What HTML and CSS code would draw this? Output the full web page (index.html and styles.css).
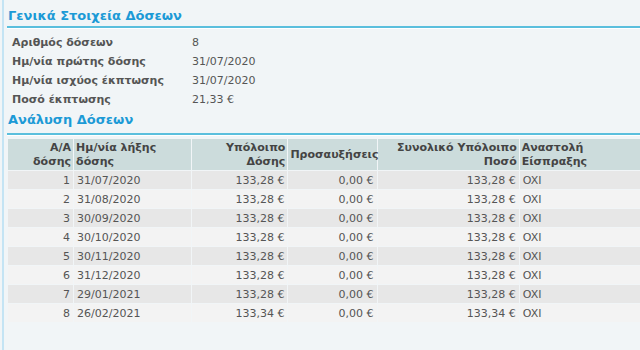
FILE: index.html
```html
<!DOCTYPE html>
<html lang="el">
<head>
<meta charset="utf-8">
<title>Γενικά Στοιχεία Δόσεων</title>
<link rel="stylesheet" href="styles.css">
</head>
<body>
<div class="page">
  <h2 class="section-title">Γενικά Στοιχεία Δόσεων</h2>
  <table class="info">
    <tr><th>Αριθμός δόσεων</th><td>8</td></tr>
    <tr><th>Ημ/νία πρώτης δόσης</th><td>31/07/2020</td></tr>
    <tr><th>Ημ/νία ισχύος έκπτωσης</th><td>31/07/2020</td></tr>
    <tr><th>Ποσό έκπτωσης</th><td>21,33 €</td></tr>
  </table>
  <h2 class="section-title second">Ανάλυση Δόσεων</h2>
  <table class="grid">
    <colgroup>
      <col class="c1"><col class="c2"><col class="c3"><col class="c4"><col class="c5"><col class="c6">
    </colgroup>
    <thead>
      <tr>
        <th class="num">Α/Α<br>δόσης</th>
        <th>Ημ/νία λήξης<br>δόσης</th>
        <th class="num">Υπόλοιπο<br>Δόσης</th>
        <th>Προσαυξήσεις</th>
        <th class="num">Συνολικό Υπόλοιπο<br>Ποσό</th>
        <th>Αναστολή<br>Είσπραξης</th>
      </tr>
    </thead>
    <tbody>
      <tr><td class="num">1</td><td>31/07/2020</td><td class="num">133,28 €</td><td class="num">0,00 €</td><td class="num">133,28 €</td><td>OXI</td></tr>
      <tr><td class="num">2</td><td>31/08/2020</td><td class="num">133,28 €</td><td class="num">0,00 €</td><td class="num">133,28 €</td><td>OXI</td></tr>
      <tr><td class="num">3</td><td>30/09/2020</td><td class="num">133,28 €</td><td class="num">0,00 €</td><td class="num">133,28 €</td><td>OXI</td></tr>
      <tr><td class="num">4</td><td>30/10/2020</td><td class="num">133,28 €</td><td class="num">0,00 €</td><td class="num">133,28 €</td><td>OXI</td></tr>
      <tr><td class="num">5</td><td>30/11/2020</td><td class="num">133,28 €</td><td class="num">0,00 €</td><td class="num">133,28 €</td><td>OXI</td></tr>
      <tr><td class="num">6</td><td>31/12/2020</td><td class="num">133,28 €</td><td class="num">0,00 €</td><td class="num">133,28 €</td><td>OXI</td></tr>
      <tr><td class="num">7</td><td>29/01/2021</td><td class="num">133,28 €</td><td class="num">0,00 €</td><td class="num">133,28 €</td><td>OXI</td></tr>
      <tr><td class="num">8</td><td>26/02/2021</td><td class="num">133,34 €</td><td class="num">0,00 €</td><td class="num">133,34 €</td><td>OXI</td></tr>
    </tbody>
  </table>
</div>
</body>
</html>
```

FILE: styles.css
```css
html, body {
  margin: 0;
  padding: 0;
  background: #f1f5f7;
  overflow: hidden;
}
body {
  font-family: "DejaVu Sans", Verdana, sans-serif;
  font-size: 11px;
  color: #555;
}
.page {
  margin-left: 2px;
  border-left: 2px solid #c4e4f4;
  padding-left: 3px;
  min-height: 350px;
  box-sizing: border-box;
}
.section-title {
  margin: 0;
  padding: 8px 0 3px 1px;
  font-size: 13px;
  line-height: 15px;
  font-weight: bold;
  color: #1c9ad6;
  border-bottom: 2px solid #5bbfdd;
  box-shadow: 0 1px 0 #fff;
}
.section-title.second {
  padding-top: 3px;
  padding-bottom: 6px;
}
.info {
  border-collapse: collapse;
  margin: 5px 0 0 0;
}
.info th,
.info td {
  height: 19px;
  padding: 0;
  text-align: left;
  vertical-align: middle;
}
.info th {
  font-weight: bold;
  padding-left: 5px;
  width: 180px;
}
.grid {
  margin-top: 3px;
  width: 660px;
  border-collapse: separate;
  border-spacing: 1px;
  table-layout: fixed;
}
.grid th {
  background: #ccdcdc;
  color: #444;
  font-weight: bold;
  text-align: left;
  vertical-align: middle;
  height: 31px;
  padding: 0 2px;
  line-height: 14px;
}
.grid td {
  height: 18px;
  padding: 0 3px;
  white-space: nowrap;
}
.grid tbody tr:nth-child(odd) td { background: #e7e7e7; }
.grid tbody tr:nth-child(even) td { background: #f3f3f3; }
.grid .num { text-align: right; }
.grid .c1 { width: 65px; }
.grid .c2 { width: 117px; }
.grid .c3 { width: 95px; }
.grid .c4 { width: 88px; }
.grid .c5 { width: 141px; }
.grid .c6 { width: 146px; }
```
